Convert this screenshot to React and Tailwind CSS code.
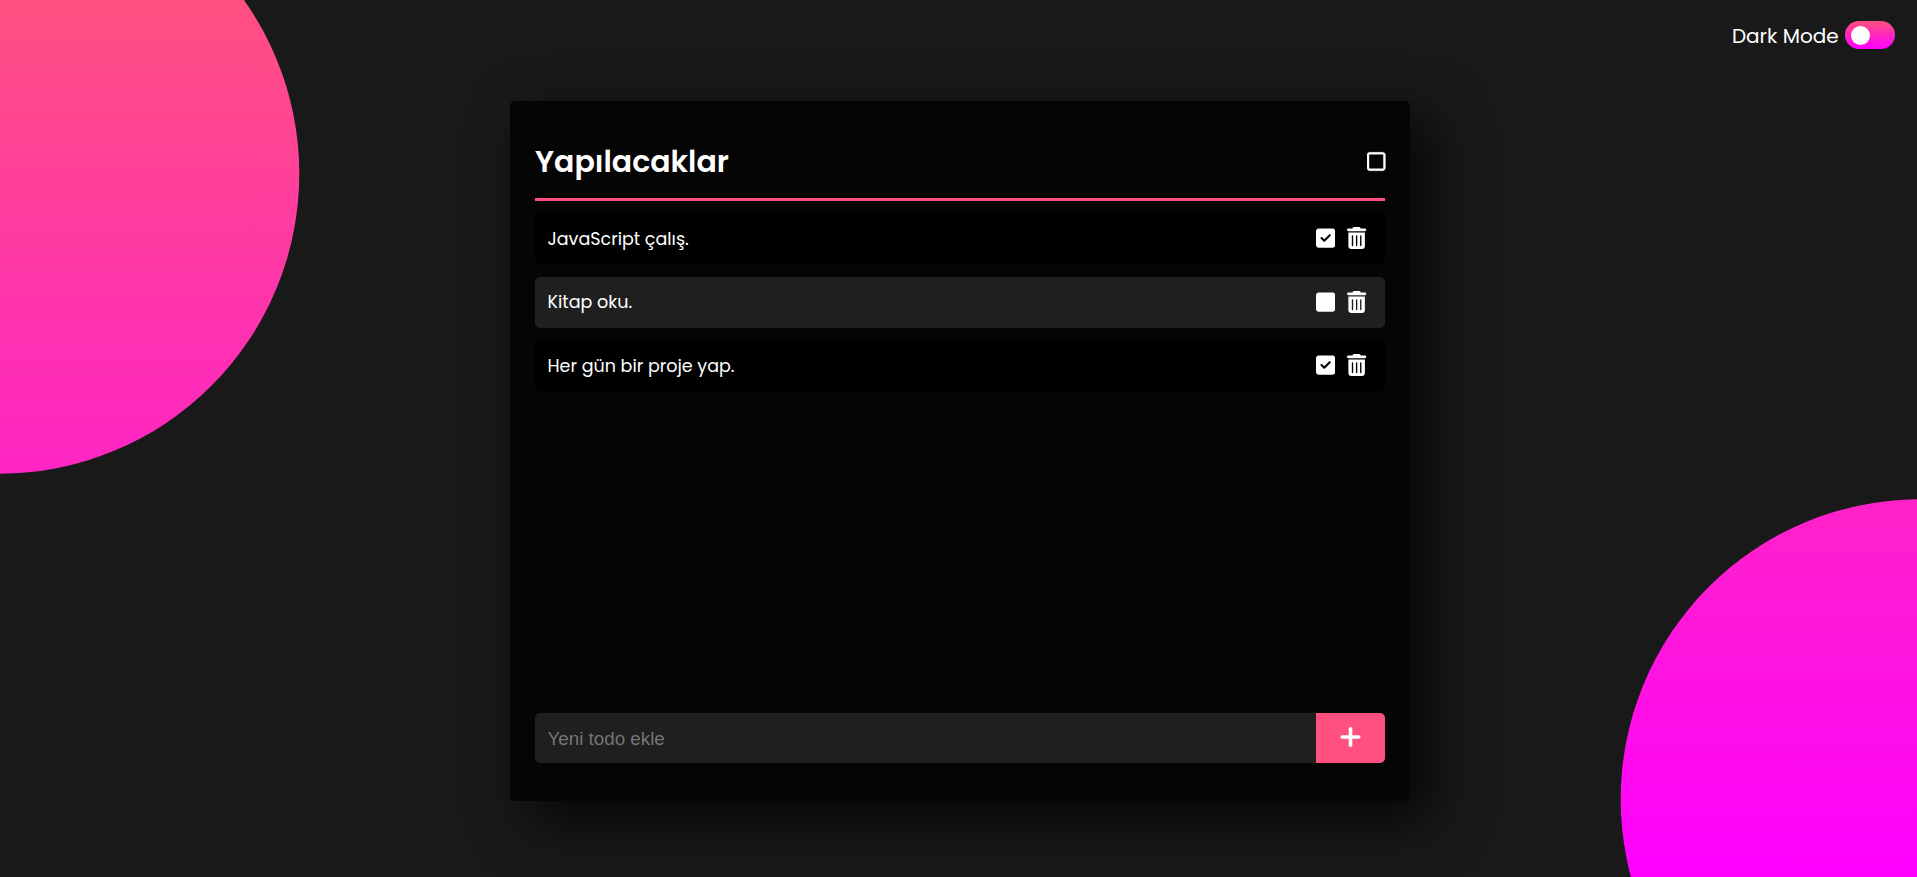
import { FaRegSquare, FaSquare, FaSquareCheck, FaTrashCan, FaPlus } from "react-icons/fa6";

const todos = [
  { text: "JavaScript çalış.", done: true },
  { text: "Kitap oku.", done: false },
  { text: "Her gün bir proje yap.", done: true },
];

function TodoItem({ todo }) {
  const Box = todo.done ? FaSquareCheck : FaSquare;
  return (
    <li
      className={`flex h-[51px] items-center justify-between rounded-[5px] pr-[18.3px] pl-[12.5px] ${
        todo.done ? "bg-black" : "bg-[#1f1f1f]"
      }`}
    >
      <span className="pt-[0.6px] text-[17.5px]">{todo.text}</span>
      <span className="flex items-center gap-[12.3px] pb-[1px]">
        <Box className="h-[22px] w-[19.25px]" />
        <FaTrashCan className="h-[22px] w-[19.25px]" />
      </span>
    </li>
  );
}

export default function App() {
  return (
    <div className="relative h-[877px] w-full overflow-hidden bg-[#191919] font-[Poppins,Inter,sans-serif] text-white">
      <div className="absolute inset-0 bg-linear-to-b/srgb from-[#ff5080] to-[#ff00ff] [clip-path:circle(300px_at_-0.7px_173.7px)]" />
      <div className="absolute inset-y-0 left-0 w-[1920px] bg-linear-to-b/srgb from-[#ff5080] to-[#ff00ff] [clip-path:circle(300px_at_1920.7px_799.2px)]" />

      <header className="relative flex h-[101px] items-start justify-end pt-[21px] pr-[22px]">
        <label className="flex items-center gap-[6.4px]">
          <span className="pt-[2px] text-xl leading-[26px]">Dark Mode</span>
          <span className="flex h-7 w-[50px] items-center rounded-full bg-linear-to-b/srgb from-[#ff5080] to-[#ff00ff] pl-[6px]">
            <span className="size-[19px] rounded-full bg-white" />
          </span>
        </label>
      </header>

      <main className="relative ml-[510px] flex h-[700px] w-[900px] flex-col rounded-[5px] bg-[#050505] px-[25px] pb-[38px] shadow-[20px_20px_55px_rgba(0,0,0,0.78)]">
        <div className="flex h-[100px] items-center justify-between border-b-3 border-[#ff5080] pt-[24px]">
          <h1 className="text-[30px] font-semibold">Yapılacaklar</h1>
          <FaRegSquare className="-mr-[0.5px] h-[21px] w-[18.4px]" stroke="currentColor" strokeWidth="10" />
        </div>
        <ul className="mt-[12.4px] flex flex-1 flex-col gap-[12.3px]">
          {todos.map((todo) => (
            <TodoItem key={todo.text} todo={todo} />
          ))}
        </ul>
        <form className="flex h-[50px] overflow-hidden rounded-[5px]">
          <input
            placeholder="Yeni todo ekle"
            className="flex-1 bg-[#1f1f1f] px-[12.5px] pt-[2px] font-['Liberation_Sans',sans-serif] text-[18.8px] outline-none placeholder:text-[#757575]"
          />
          <button type="button" className="flex w-[69px] items-center justify-center bg-[#ff5080] pb-[3px]">
            <FaPlus className="h-6 w-[21px]" stroke="currentColor" strokeWidth="12" />
          </button>
        </form>
      </main>
    </div>
  );
}
